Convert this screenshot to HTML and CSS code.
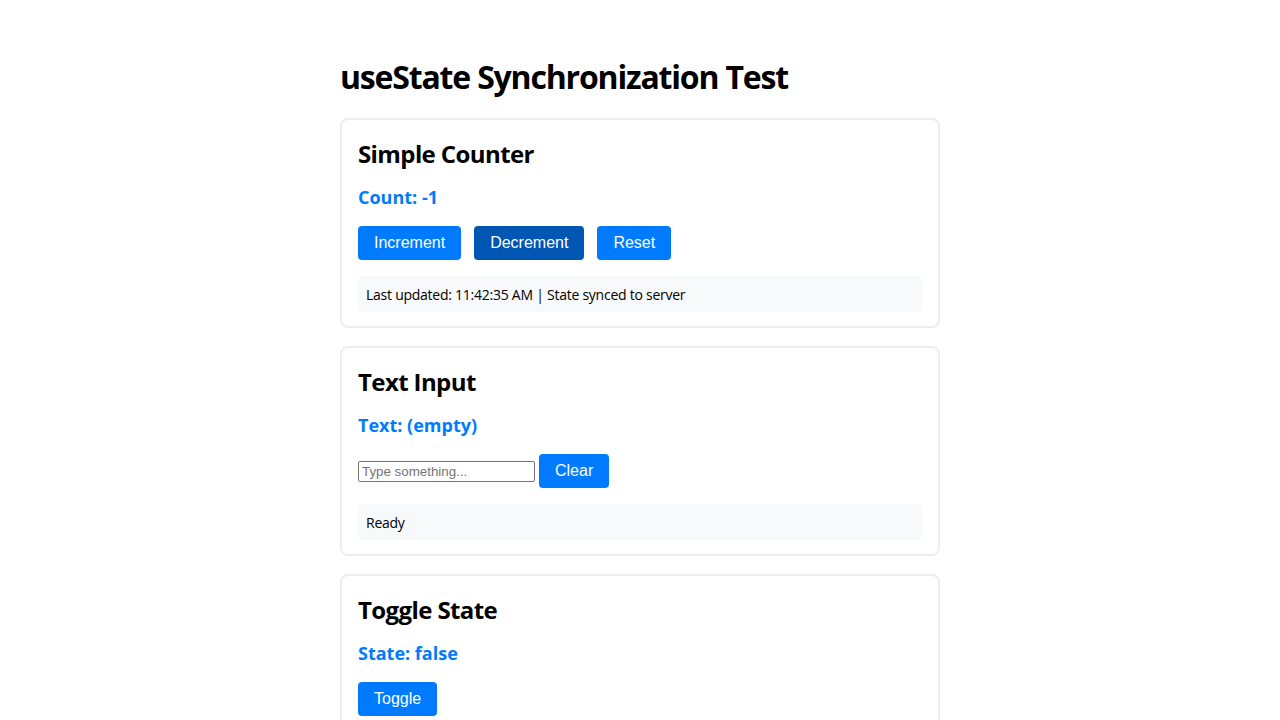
FILE: index.html
```html
<!DOCTYPE html>
<html lang="en">
<head>
<meta charset="utf-8">
<title>useState Synchronization Test</title>
<link rel="stylesheet" href="styles.css">
</head>
<body>
<div class="app">
  <h1 class="title">useState Synchronization Test</h1>

  <section class="card">
    <h2 class="card-title">Simple Counter</h2>
    <p class="value">Count: -1</p>
    <div class="row">
      <button class="btn">Increment</button>
      <button class="btn btn-active">Decrement</button>
      <button class="btn">Reset</button>
    </div>
    <div class="status">Last updated: 11:42:35 AM | State synced to server</div>
  </section>

  <section class="card">
    <h2 class="card-title">Text Input</h2>
    <p class="value">Text: (empty)</p>
    <div class="row row-tight">
      <input class="text-input" type="text" placeholder="Type something...">
      <button class="btn">Clear</button>
    </div>
    <div class="status">Ready</div>
  </section>

  <section class="card">
    <h2 class="card-title">Toggle State</h2>
    <p class="value">State: false</p>
    <div class="row">
      <button class="btn">Toggle</button>
    </div>
  </section>
</div>
</body>
</html>
```

FILE: styles.css
```css
html, body {
  margin: 0;
  padding: 0;
  background: #ffffff;
}

body {
  font-family: "Open Sans", "Noto Sans", "DejaVu Sans", sans-serif;
  color: #000;
}

.app {
  max-width: 600px;
  margin: 0 auto;
  padding: 34px 0;
}

.title {
  font-size: 32px;
  font-weight: 700;
  line-height: 43px;
  letter-spacing: -0.037em;
  margin: 21px 0 20px;
}

.card {
  border: 2px solid #eeeeee;
  border-radius: 8px;
  padding: 16px 16px 14px;
  margin-bottom: 18px;
}

.card-title {
  font-size: 24px;
  font-weight: 700;
  line-height: 32px;
  letter-spacing: -0.025em;
  margin: 2px 0 15px;
}

.value {
  font-size: 18px;
  font-weight: 700;
  line-height: 24px;
  color: #007bff;
  margin: 0 0 16px;
}

.row {
  display: flex;
  align-items: center;
  gap: 13px;
  padding-top: 1px;
}

.row-tight {
  gap: 4px;
}

.btn {
  font-family: "Liberation Sans", Arial, sans-serif;
  font-size: 16px;
  line-height: 18px;
  padding: 8px 16px;
  color: #fff;
  background: #007bff;
  border: none;
  border-radius: 4px;
  cursor: pointer;
}

.btn-active {
  background: #0056b3;
}

.text-input {
  font-family: "Liberation Sans", Arial, sans-serif;
  font-size: 13.33px;
  width: 177px;
  height: 21px;
  box-sizing: border-box;
  padding: 1px 3px;
  border: 1px solid #767676;
  border-radius: 2px;
}

.text-input::placeholder {
  color: #757575;
}

.status {
  margin-top: 16px;
  padding: 9px 8px 7px;
  background: #f8f9fa;
  border-radius: 4px;
  font-size: 14px;
  line-height: 20px;
  letter-spacing: -0.018em;
}
```
